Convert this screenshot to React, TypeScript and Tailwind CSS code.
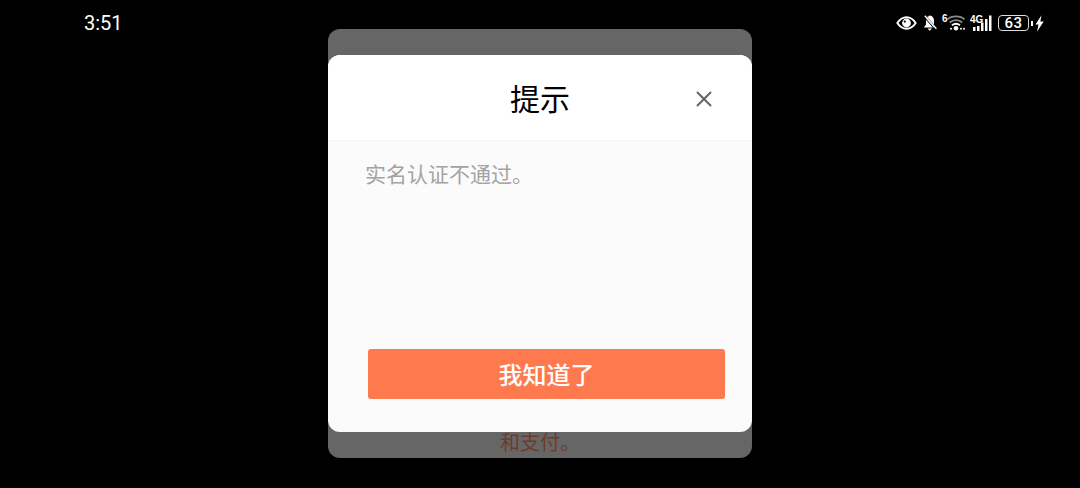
import { X } from "lucide-react";

const cjk = { fontFamily: '"Noto Sans CJK SC", "Noto Sans", sans-serif' };

function StatusIcons() {
  return (
    <div className="flex items-center text-white">
      {/* eye */}
      <svg width="21" height="14" viewBox="0 0 21 14" className="mr-[6px]">
        <path d="M0.200 7C3 2.500 6.500 0.300 10.500 0.300S18 2.500 20.800 7C18 11.500 14.500 13.700 10.500 13.700S3 11.500 0.200 7Z" fill="#fff" />
        <path d="M2.500 7C4.500 4 7 2.200 10.500 2.200S16.500 4 18.500 7C16.500 10 14 11.800 10.500 11.800S4.500 10 2.500 7Z" fill="#000" />
        <circle cx="10.500" cy="7" r="4.400" fill="#fff" />
        <circle cx="8.800" cy="5.600" r="1.100" fill="#000" />
      </svg>
      {/* muted bell */}
      <svg width="14" height="16" viewBox="0 0 14 16" className="mr-[5px]">
        <path d="M6.800 0.500C4.500 0.800 3 3 3 5.500V9.500L0.800 12.500H11.500L3.200 3.500" fill="#fff" />
        <path d="M6.800 0.500C9.500 0.800 11 3 11 5.500V9.500L4.500 2.500Z" fill="#fff" />
        <path d="M4.500 13.400H9L6.800 15.800Z" fill="#fff" />
        <path d="M0.800 1.800L12 14.500" stroke="#000" strokeWidth="1" />
        <path d="M1.800 0.800L13.400 13.800" stroke="#fff" strokeWidth="1.300" />
      </svg>
      {/* wifi */}
      <div className="relative mr-[5px] h-[16px] w-[23px]">
        <span className="absolute left-0 top-[-1px] text-[10px] font-bold leading-[10px]" style={{ fontFamily: '"Liberation Sans", sans-serif' }}>6</span>
        <svg width="23" height="16" viewBox="0 0 23 16" className="absolute left-0 top-0">
          <path d="M5.500 4.500C9.500 0.300 18.500 0.300 22.500 4.500" stroke="#8c8c8c" strokeWidth="1.800" fill="none" />
          <path d="M7.800 7.500C11 4.300 17 4.300 20.200 7.500" stroke="#8c8c8c" strokeWidth="1.800" fill="none" />
          <path d="M10 10.300C12.500 8.300 15.500 8.300 18 10.300" stroke="#fff" strokeWidth="1.800" fill="none" />
          <circle cx="14" cy="13.200" r="2.300" fill="#fff" />
          <circle cx="9" cy="13.800" r="1" fill="#fff" />
          <circle cx="19" cy="13.800" r="1" fill="#fff" />
          <circle cx="22" cy="13.800" r="1" fill="#fff" />
        </svg>
      </div>
      {/* cellular */}
      <div className="relative mr-[6px] h-[16px] w-[22px]">
        <span className="absolute left-0 top-[0px] text-[10px] font-bold leading-[10px]" style={{ fontFamily: '"Liberation Sans", sans-serif' }}>4G</span>
        <svg width="22" height="16" viewBox="0 0 22 16" className="absolute left-0 top-0">
          <rect x="3" y="12" width="2.500" height="4" fill="#fff" />
          <rect x="7" y="11" width="2.500" height="5" fill="#fff" />
          <rect x="11" y="7.500" width="2.500" height="8.500" fill="#fff" />
          <rect x="15" y="4" width="2.500" height="12" fill="#fff" />
          <rect x="19" y="0.500" width="2.500" height="15.500" fill="#fff" />
        </svg>
      </div>
      {/* battery */}
      <div className="mr-[2px] flex h-[16px] w-[31px] items-center justify-center rounded-[4px] border-[1.5px] border-[#dddddd] text-[15px] font-medium leading-none tracking-[0.5px]" style={{ fontFamily: 'Roboto, sans-serif' }}>
        63
      </div>
      <div className="mr-[2px] h-[5px] w-[2px] bg-white" />
      <svg width="9" height="17" viewBox="0 0 9 17">
        <path d="M6.500 0.300L0.500 9.500H3.500L2 16.700L8.700 6.500H5.300Z" fill="#fff" />
      </svg>
    </div>
  );
}

export default function App() {
  return (
    <div className="flex h-[488px] w-[1080px] flex-col overflow-hidden bg-black">
      <div className="-mb-[17px] flex h-[46px] shrink-0 items-center justify-between pl-[84px] pr-[36px]">
        <span className="text-[20px] leading-none text-white" style={{ fontFamily: 'Roboto, sans-serif' }}>3:51</span>
        <StatusIcons />
      </div>
      <div className="mx-auto flex h-[429px] w-[424px] flex-col rounded-[12px] bg-[#666666] pt-[26px]">
        <div className="flex h-[377px] flex-col overflow-hidden rounded-[12px] bg-[#fbfbfb]">
          <div className="relative flex h-[86px] shrink-0 items-center justify-center border-b border-[#f5f5f5] bg-white">
            <span className="pb-[2px] text-[30px] leading-none text-black" style={cjk}>提示</span>
            <X className="absolute right-[35px] top-[31px] text-[#666666]" size={26} strokeWidth={1.9} />
          </div>
          <div className="flex flex-1 flex-col pl-[37px] pr-[27px]">
            <p className="mt-[18px] text-[21px] leading-[28px] text-[#a3a3a3]" style={cjk}>实名认证不通过。</p>
            <button className="ml-[3px] mt-auto mb-[33px] flex h-[50px] items-center justify-center rounded-[3px] bg-[#ff794f] text-[24px] font-medium text-white" style={cjk}>
              我知道了
            </button>
          </div>
        </div>
        <p className="-mt-[3px] text-center text-[20px] leading-[26px] text-[#6f3b2a]" style={cjk}>和支付。</p>
      </div>
    </div>
  );
}
